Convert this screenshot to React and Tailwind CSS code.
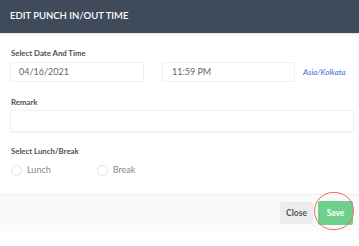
export default function App() {
  const font = { fontFamily: "Lato, 'Open Sans', sans-serif" };
  return (
    <div className="relative w-[359px] h-[246px] bg-white overflow-hidden" style={font}>
      <div className="h-[33px] bg-[#3f4a5a] px-[10px] flex items-center shadow-[0_1px_2px_rgba(0,0,0,0.15)]">
        <span className="text-white text-[9.5px] font-semibold">EDIT PUNCH IN/OUT TIME</span>
      </div>
      <div className="px-[10px]">
        <div className="mt-[15px] h-[10px] leading-[10px] text-[7.8px] font-bold text-[#505050] pl-[1px]">Select Date And Time</div>
        <div className="mt-[4px] flex items-center">
          <div className="w-[134px] h-[20px] border border-[#efefef] rounded-[2px] flex items-center pl-[8px] text-[9px] text-[#666]">04/16/2021</div>
          <div className="ml-[18px] w-[133px] h-[20px] border border-[#efefef] rounded-[2px] flex items-center pl-[9px] text-[9px] text-[#666]">11:59 PM</div>
          <div className="ml-[8px] text-[8px] italic text-[#3b6fd6]">Asia/Kolkata</div>
        </div>
        <div className="mt-[15px] h-[10px] leading-[10px] text-[7.8px] font-bold text-[#505050] pl-[1px]">Remark</div>
        <div className="mt-[3px] w-[344px] h-[22px] border border-[#efefef] rounded-[2px] shadow-[0_1px_1px_rgba(0,0,0,0.03)]"></div>
        <div className="mt-[14px] h-[10px] leading-[10px] text-[7.8px] font-bold text-[#505050] pl-[1px]">Select Lunch/Break</div>
        <div className="mt-[8px] h-[12px] flex items-center">
          <div className="ml-[1px] w-[11px] h-[11px] rounded-full border border-[#e2e2e2]"></div>
          <span className="ml-[5px] text-[9px] text-[#888]">Lunch</span>
          <div className="ml-[46px] w-[11px] h-[11px] rounded-full border border-[#e2e2e2]"></div>
          <span className="ml-[5px] text-[9px] text-[#888]">Break</span>
        </div>
      </div>
      <div className="mt-[18px] h-[37px] border-t border-[#f0f0f0] bg-[#fafafa] flex items-center justify-end pr-[6px]">
        <div className="w-[33px] h-[22px] bg-[#ececec] rounded-[2px] flex items-center justify-center text-[8.5px] font-bold text-[#555]">Close</div>
        <div className="ml-[5px] w-[35px] h-[24px] bg-[#6fd08c] rounded-[2px] flex items-center justify-center text-[8.5px] font-bold text-white">Save</div>
      </div>
      <div className="absolute left-[314px] top-[192px] w-[40px] h-[38px] rounded-full border border-[#ef6b6b]"></div>
    </div>
  );
}
